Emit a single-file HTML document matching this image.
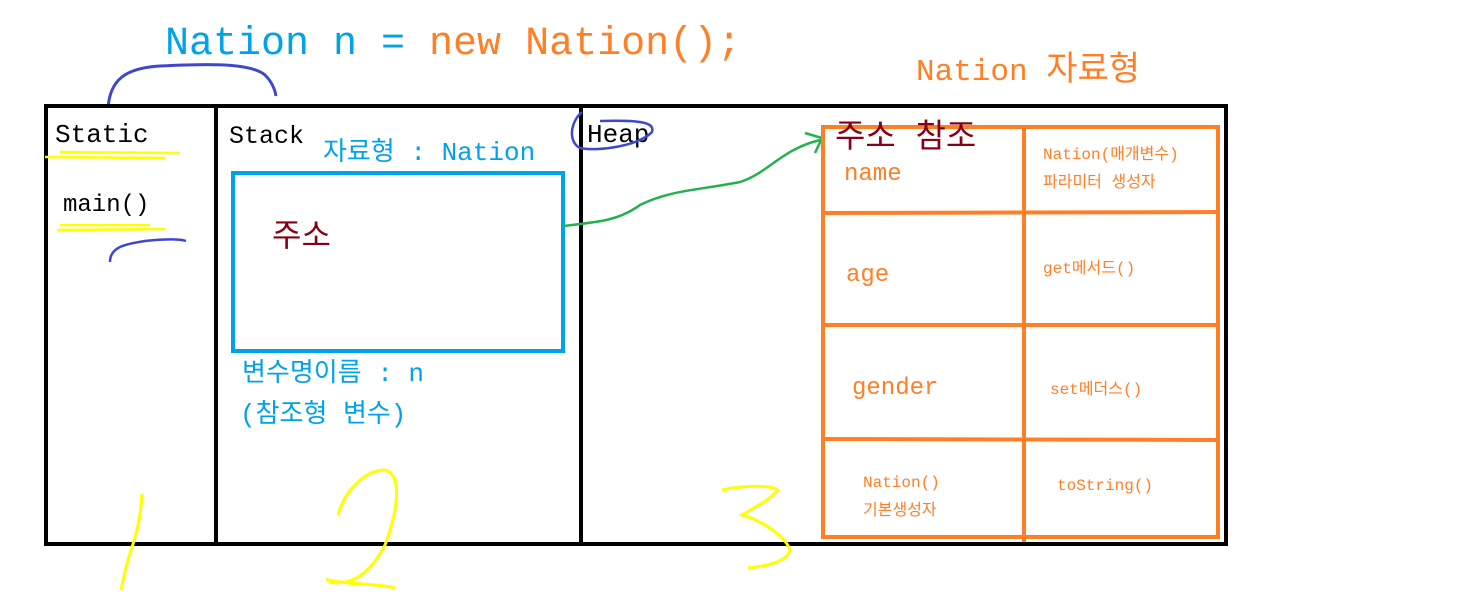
<!DOCTYPE html>
<html><head><meta charset="utf-8"><style>
html,body{margin:0;padding:0;background:#fff;width:1479px;height:612px;overflow:hidden}
svg{display:block}
text{font-family:"Liberation Mono","Noto Sans CJK KR",monospace}
</style></head><body>
<svg width="1479" height="612" viewBox="0 0 1479 612" xmlns="http://www.w3.org/2000/svg">
<text x="165" y="54" font-size="40" fill="#00a2e8">Nation n = <tspan fill="#ff7f27">new Nation();</tspan></text>
<text x="916" y="80" font-size="31" fill="#ff7f27">Nation <tspan font-size="34">자료형</tspan></text>
<path d="M108,108 C110,80 125,68 160,66 C200,64 250,62 265,75 C272,82 275,90 276,96" fill="none" stroke="#3f48cc" stroke-width="3"/>
<rect x="46" y="106" width="1180" height="438" fill="none" stroke="#000" stroke-width="4"/>
<line x1="216" y1="106" x2="216" y2="544" stroke="#000" stroke-width="4"/>
<line x1="581" y1="106" x2="581" y2="544" stroke="#000" stroke-width="4"/>
<text x="55" y="142" font-size="26" fill="#000">Static</text>
<path d="M45,157 L165,158 M60,152 L180,153" stroke="#ffff00" stroke-width="2.5" fill="none"/>
<text x="63" y="211" font-size="24" fill="#000">main()</text>
<path d="M60,225 L150,225 M57,230 L165,229" stroke="#ffff00" stroke-width="2.5" fill="none"/>
<path d="M110,262 C110,247 125,244 145,241 C165,239 180,239 186,241" stroke="#3f48cc" stroke-width="2.5" fill="none"/>
<text x="229" y="143" font-size="25" fill="#000">Stack</text>
<text x="323" y="160" font-size="26" fill="#00a2e8">자료형 : Nation</text>
<rect x="233" y="173" width="330" height="178" fill="none" stroke="#00a2e8" stroke-width="4"/>
<text x="272" y="246" font-size="32" fill="#880015">주소</text>
<text x="242" y="381" font-size="26" fill="#00a2e8">변수명이름 : n</text>
<text x="240" y="422" font-size="26" fill="#00a2e8">(참조형 변수)</text>
<text x="587" y="142" font-size="26" fill="#000">Heap</text>
<path d="M582,112 C570,122 568,142 580,148 C600,152 640,145 652,132 C655,122 640,120 600,121" stroke="#3f48cc" stroke-width="2.5" fill="none"/>
<path d="M563,226 C600,222 620,220 640,205 C670,190 700,190 740,182 C770,172 780,150 820,140" stroke="#22b14c" stroke-width="2.5" fill="none"/>
<path d="M805,133 L822,138 L815,153" stroke="#22b14c" stroke-width="2.5" fill="none"/>
<rect x="823" y="127" width="395" height="410" fill="none" stroke="#ff7f27" stroke-width="4"/>
<line x1="1024" y1="127" x2="1024" y2="542" stroke="#ff7f27" stroke-width="4"/>
<line x1="823" y1="213" x2="1220" y2="212" stroke="#ff7f27" stroke-width="4"/>
<line x1="823" y1="325" x2="1220" y2="325" stroke="#ff7f27" stroke-width="4"/>
<line x1="823" y1="439" x2="1220" y2="440" stroke="#ff7f27" stroke-width="4"/>
<text x="835" y="147" font-size="33" fill="#880015">주소 참조</text>
<text x="844" y="180" font-size="24" fill="#ff7f27">name</text>
<text x="846" y="281" font-size="24" fill="#ff7f27">age</text>
<text x="852" y="394" font-size="24" fill="#ff7f27">gender</text>
<text x="863" y="487" font-size="16" fill="#ff7f27">Nation()</text>
<text x="863" y="515" font-size="16" fill="#ff7f27">기본생성자</text>
<text x="1043" y="159" font-size="16" fill="#ff7f27">Nation(매개변수)</text>
<text x="1043" y="187" font-size="16" fill="#ff7f27">파라미터 생성자</text>
<text x="1043" y="273" font-size="16" fill="#ff7f27">get메서드()</text>
<text x="1050" y="394" font-size="16" fill="#ff7f27">set메더스()</text>
<text x="1057" y="490" font-size="16" fill="#ff7f27">toString()</text>
<path d="M142,494 C140,530 132,545 128,560 C124,575 122,585 121,590" stroke="#ffff00" stroke-width="3" fill="none"/>
<path d="M338,515 C345,490 365,470 385,470 C405,475 395,520 385,545 C375,565 360,580 345,582 C340,582 330,585 328,580 C350,585 375,583 395,588" stroke="#ffff00" stroke-width="3" fill="none"/>
<path d="M722,490 C745,485 770,485 778,490 C770,500 750,510 742,515 C760,520 785,535 790,550 C788,560 770,566 748,568" stroke="#ffff00" stroke-width="3" fill="none"/>
</svg>
</body></html>
